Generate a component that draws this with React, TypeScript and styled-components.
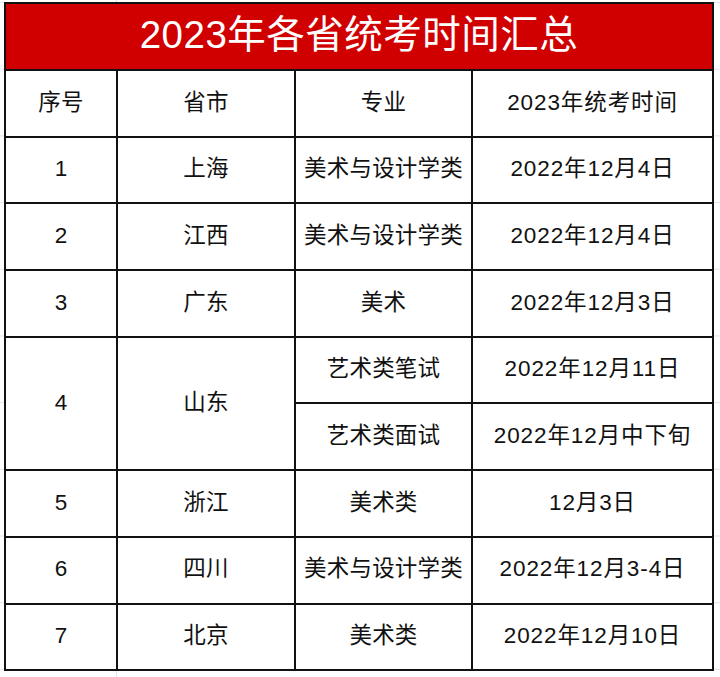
import React from "react";
import styled, { createGlobalStyle } from "styled-components";

const GlobalStyle = createGlobalStyle`
  html, body {
    margin: 0;
    padding: 0;
    background: #ffffff;
  }
  body {
    font-family: "Liberation Sans", "Noto Sans CJK SC", sans-serif;
    color: #111111;
  }
`;

const Page = styled.div`
  width: 720px;
  height: 677px;
  box-sizing: border-box;
  padding: 2px 0 0 4px;
  background-color: #ffffff;
  background-image: linear-gradient(to right, #dfe5ef 1px, transparent 1px),
    linear-gradient(to bottom, #dfe5ef 1px, transparent 1px);
  background-size: 100% 100%, 100% 66.7px;
  background-position: 116px 0, 0 2px;
  overflow: hidden;
`;

const Sheet = styled.table`
  width: 708px;
  border-collapse: collapse;
  table-layout: fixed;
  background: #ffffff;
`;

const TitleCell = styled.th`
  height: 62px;
  padding: 0 0 3px;
  background: #d10000;
  color: #ffffff;
  font-size: 38.5px;
  line-height: 1.2;
  font-weight: 400;
  letter-spacing: 0.5px;
  border: 2px solid #111111;
  text-align: center;
  vertical-align: middle;
`;

const Cell = styled.td<{ $wide?: boolean }>`
  height: 62.2px;
  padding: 0 0 2.5px;
  border: 2px solid #111111;
  text-align: center;
  vertical-align: middle;
  font-size: 22.5px;
  line-height: 1.2;
  letter-spacing: ${(p) => (p.$wide ? "0.9px" : "0.2px")};
  white-space: nowrap;
`;

interface Row {
  no: string;
  area: string;
  items: { major: string; date: string }[];
}

const rows: Row[] = [
  { no: "1", area: "上海", items: [{ major: "美术与设计学类", date: "2022年12月4日" }] },
  { no: "2", area: "江西", items: [{ major: "美术与设计学类", date: "2022年12月4日" }] },
  { no: "3", area: "广东", items: [{ major: "美术", date: "2022年12月3日" }] },
  {
    no: "4",
    area: "山东",
    items: [
      { major: "艺术类笔试", date: "2022年12月11日" },
      { major: "艺术类面试", date: "2022年12月中下旬" },
    ],
  },
  { no: "5", area: "浙江", items: [{ major: "美术类", date: "12月3日" }] },
  { no: "6", area: "四川", items: [{ major: "美术与设计学类", date: "2022年12月3-4日" }] },
  { no: "7", area: "北京", items: [{ major: "美术类", date: "2022年12月10日" }] },
];

const App = () => {
  return (
    <>
      <GlobalStyle />
      <Page>
        <Sheet>
          <colgroup>
            <col style={{ width: 112 }} />
            <col style={{ width: 178 }} />
            <col style={{ width: 177 }} />
            <col style={{ width: 241 }} />
          </colgroup>
          <thead>
            <tr>
              <TitleCell colSpan={4}>2023年各省统考时间汇总</TitleCell>
            </tr>
          </thead>
          <tbody>
            <tr>
              <Cell>序号</Cell>
              <Cell>省市</Cell>
              <Cell>专业</Cell>
              <Cell $wide>2023年统考时间</Cell>
            </tr>
            {rows.map((r) =>
              r.items.map((it, i) => (
                <tr key={r.no + i}>
                  {i === 0 && <Cell rowSpan={r.items.length}>{r.no}</Cell>}
                  {i === 0 && <Cell rowSpan={r.items.length}>{r.area}</Cell>}
                  <Cell>{it.major}</Cell>
                  <Cell $wide>{it.date}</Cell>
                </tr>
              ))
            )}
          </tbody>
        </Sheet>
      </Page>
    </>
  );
};

export default App;
